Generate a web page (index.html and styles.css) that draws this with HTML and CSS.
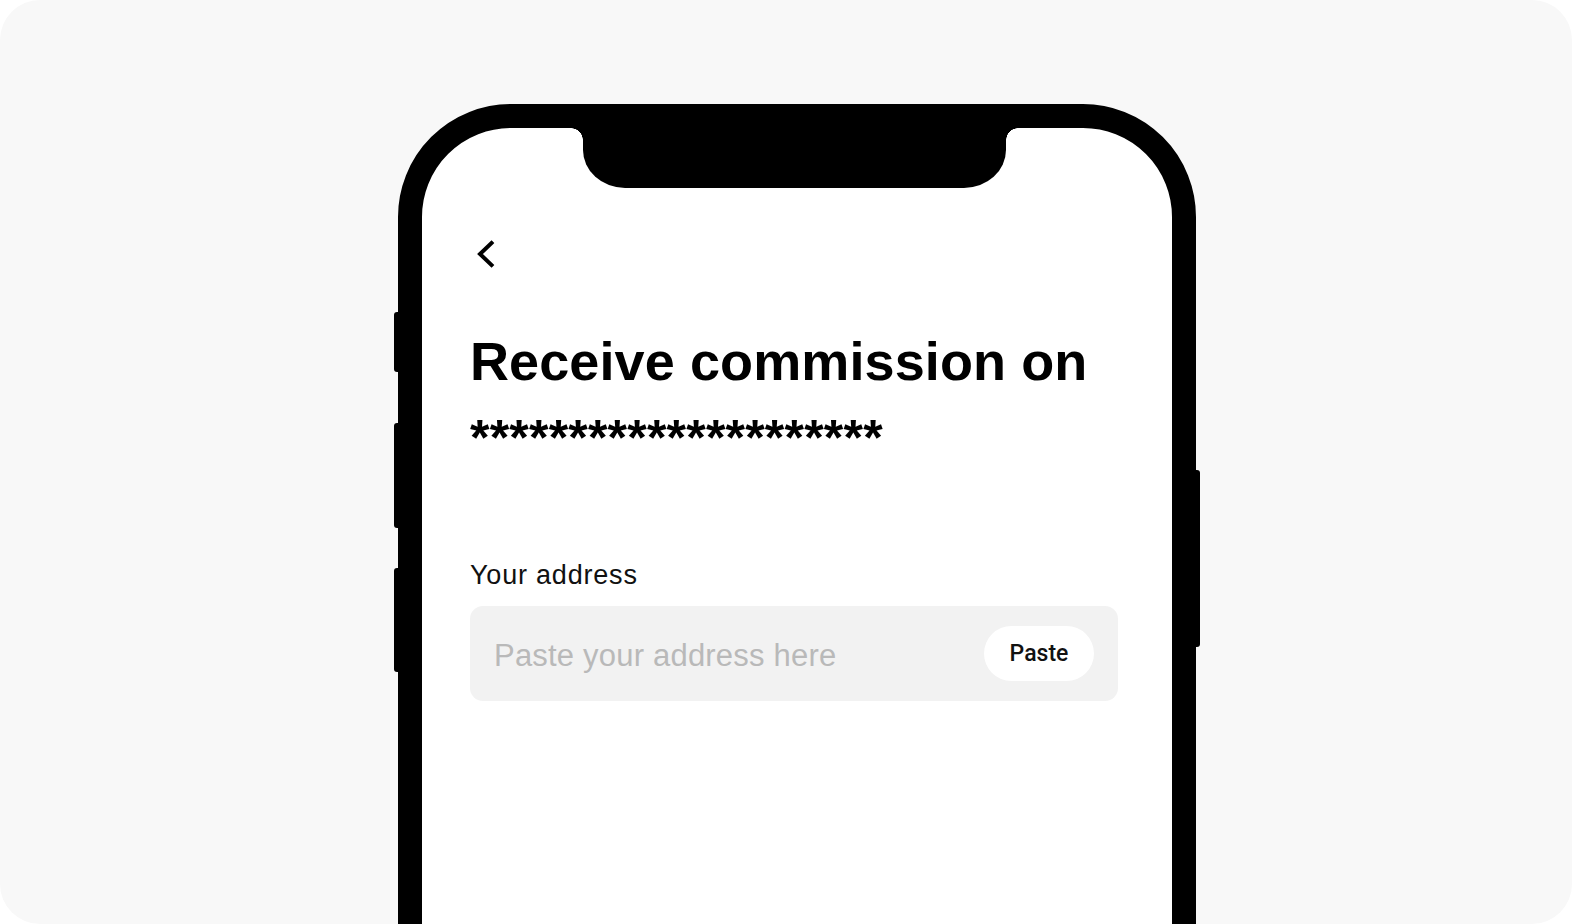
FILE: index.html
```html
<!DOCTYPE html>
<html lang="en">
<head>
<meta charset="utf-8">
<title>Receive commission</title>
<link rel="stylesheet" href="styles.css">
</head>
<body>
<div class="card">
  <div class="phone">
    <span class="btn btn-l1"></span>
    <span class="btn btn-l2"></span>
    <span class="btn btn-l3"></span>
    <span class="btn btn-r1"></span>
    <div class="notch"></div>
    <div class="screen">
      <svg class="back" width="30" height="30" viewBox="0 0 30 30">
        <polyline points="21.5,5 10,16 21.5,27" fill="none" stroke="#000" stroke-width="4" stroke-linecap="square" stroke-linejoin="miter"/>
      </svg>
      <h1 class="title">Receive commission on</h1>
      <div class="stars">*********************</div>
      <label class="label">Your address</label>
      <div class="field">
        <span class="placeholder">Paste your address here</span>
        <button class="paste">Paste</button>
      </div>
    </div>
  </div>
</div>
</body>
</html>
```
FILE: styles.css
```css
html, body {
  margin: 0;
  padding: 0;
  background: #ffffff;
}
body {
  width: 1572px;
  height: 924px;
  overflow: hidden;
  font-family: "Liberation Sans", Arial, sans-serif;
}
.card {
  width: 1572px;
  height: 924px;
  background: #f8f8f8;
  border-radius: 40px;
  overflow: hidden;
  box-sizing: border-box;
  padding-top: 104px;
  padding-left: 398px;
}
.phone {
  position: relative;
  width: 798px;
  height: 1000px;
  box-sizing: border-box;
  border: 24px solid #000;
  border-radius: 113px;
  background: #fff;
}
.btn {
  position: absolute;
  width: 10px;
  background: #000;
  border-radius: 3px;
}
.btn-l1 { left: -28px; top: 184px; height: 60px; }
.btn-l2 { left: -28px; top: 295px; height: 105px; }
.btn-l3 { left: -28px; top: 440px; height: 104px; }
.btn-r1 { right: -28px; top: 342px; height: 177px; }
.notch {
  position: absolute;
  left: 161px;
  top: 0;
  width: 423px;
  height: 60px;
  background: #000;
  border-radius: 0 0 42px 42px / 0 0 38px 38px;
}
.notch::before,
.notch::after {
  content: "";
  position: absolute;
  top: 0;
  width: 12px;
  height: 12px;
}
.notch::before {
  left: -12px;
  background: radial-gradient(circle at 0 100%, transparent 11.5px, #000 12px);
}
.notch::after {
  right: -12px;
  background: radial-gradient(circle at 100% 100%, transparent 11.5px, #000 12px);
}
.screen {
  display: flex;
  flex-direction: column;
  align-items: flex-start;
  padding: 110px 54px 0 48px;
}
.back {
  display: block;
}
.title {
  margin: 63px 0 0 0;
  font-size: 54px;
  line-height: 60px;
  font-weight: 700;
  letter-spacing: 0.1px;
  color: #000;
  white-space: nowrap;
}
.stars {
  margin-top: 22px;
  font-size: 50px;
  line-height: 50px;
  font-weight: 700;
  letter-spacing: 0.2px;
  color: #000;
  white-space: nowrap;
}
.label {
  margin-top: 97px;
  font-size: 27px;
  line-height: 30px;
  color: #111;
  letter-spacing: 0.8px;
}
.field {
  margin-top: 16px;
  align-self: stretch;
  height: 95px;
  box-sizing: border-box;
  background: #f2f2f2;
  border-radius: 13px;
  display: flex;
  align-items: center;
  justify-content: space-between;
  padding: 4px 24px 0 24px;
}
.placeholder {
  font-size: 31px;
  color: #b9b9b9;
  letter-spacing: 0.2px;
}
.paste {
  margin-top: -4px;
  width: 110px;
  height: 55px;
  border: none;
  border-radius: 28px;
  background: #fff;
  font-family: Roboto, "Liberation Sans", sans-serif;
  font-weight: 500;
  font-size: 23px;
  color: #111;
  padding: 0;
}
```
